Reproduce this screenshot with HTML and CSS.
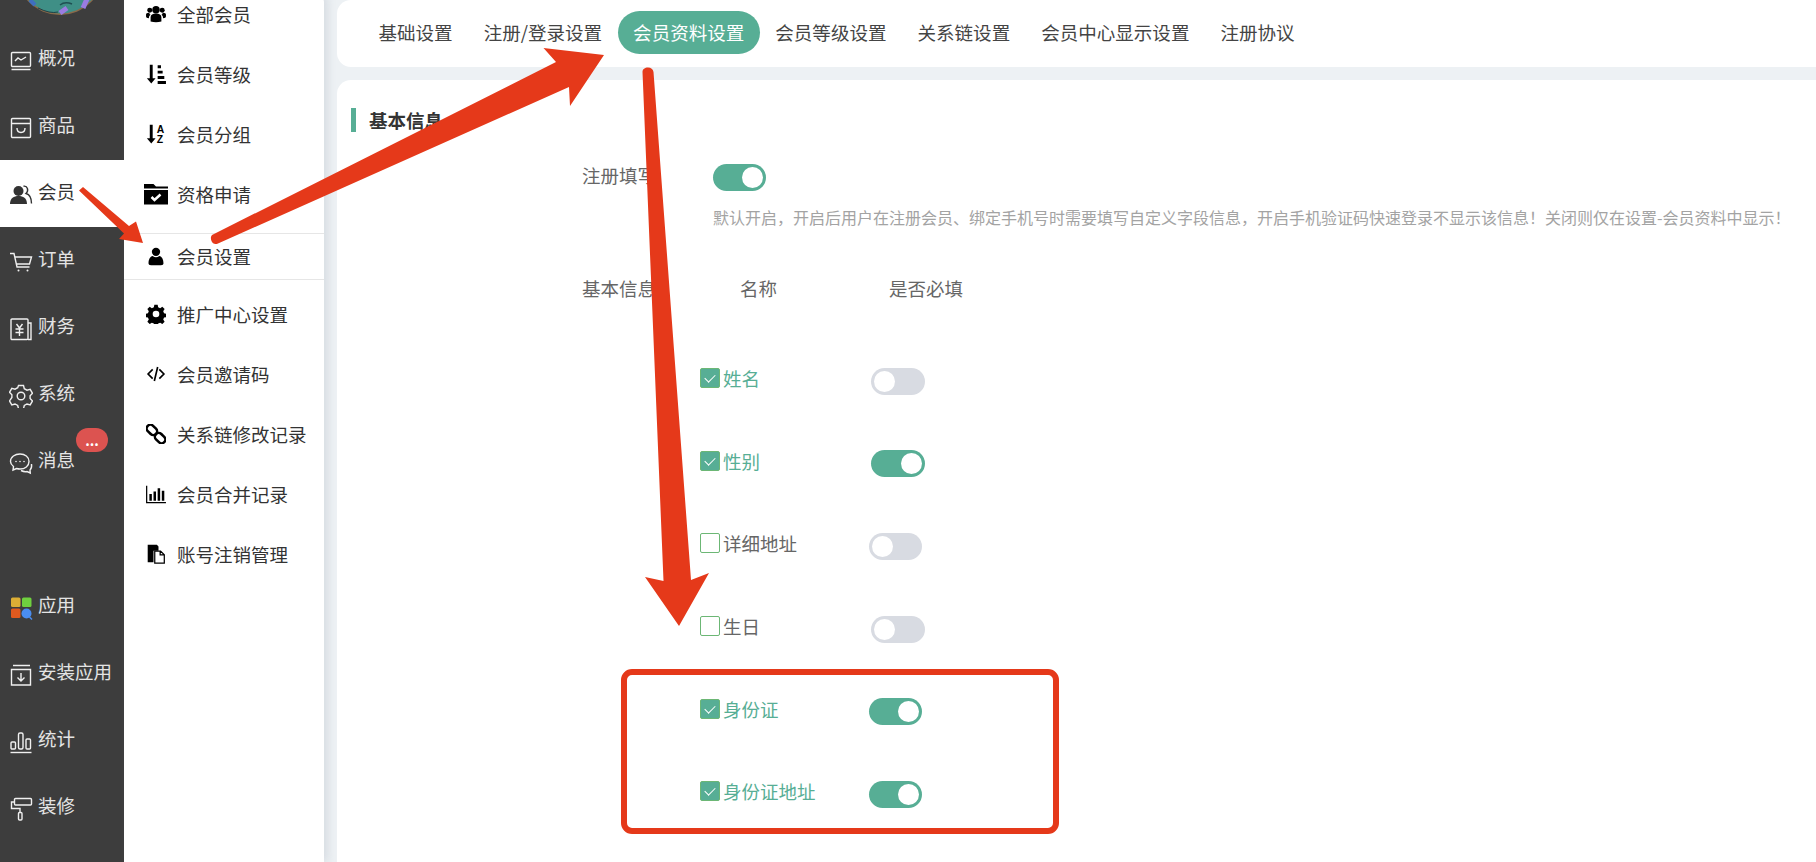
FILE: index.html
```html
<!DOCTYPE html>
<html lang="zh-CN">
<head>
    <meta charset="UTF-8">
    <title>会员资料设置</title>
    <link rel="stylesheet" href="styles.css">
</head>
<body>
    <aside class="sidebar">
        <div class="avatar-wrap">
            <svg class="avatar" viewBox="0 0 124 26">
                <circle cx="60" cy="-29" r="44" fill="#8a6a4a"/>
                <circle cx="60" cy="-30" r="43.500" fill="#3f8f86"/>
                <path d="M38 8q12 6 20 4" stroke="#1f3f44" stroke-width="1" fill="none"/>
                <path d="M60 5q5-4 12-1" stroke="#1f4f52" stroke-width="1.500" fill="none"/>
                <path d="M60 13l7-5M83 8l4-9" stroke="#9a7ce0" stroke-width="5" fill="none"/>
                <path d="M30 0l5 5" stroke="#3f6fc0" stroke-width="4" fill="none"/>
            </svg>
        </div>
        <nav class="side-group">
            <a class="side-item">
                <svg class="side-icon" viewBox="0 0 24 24"><rect x="2.500" y="3.500" width="19" height="14" rx="1"/><path d="M6 12l3-3 3 2 5-3M2.500 20.500h19"/></svg>
                <span>概况</span>
            </a>
            <a class="side-item">
                <svg class="side-icon" viewBox="0 0 24 24"><rect x="2.500" y="2.500" width="19" height="19" rx="1"/><path d="M2.500 7.500h19M8 12c0 6 8 6 8 0"/></svg>
                <span>商品</span>
            </a>
            <a class="side-item active">
                <svg class="side-icon icon-dark" viewBox="0 0 24 24"><circle cx="9.500" cy="8" r="5" class="fill"/><path d="M1 21c0-6 4-8 8.500-8s8.500 2 8.500 8z" class="fill"/><path d="M14.500 3.200c4-.8 5.600 4.500 2.500 7.300 3.500 1 5.500 4.500 5.500 10"/></svg>
                <span>会员</span>
            </a>
            <a class="side-item">
                <svg class="side-icon" viewBox="0 0 24 24"><path d="M1 3.500h4l3 13.500h12.500M6 7h16.500l-2 7H7.500"/><circle cx="9.500" cy="20.500" r="1" class="fill"/><circle cx="18.500" cy="20.500" r="1" class="fill"/></svg>
                <span>订单</span>
            </a>
            <a class="side-item">
                <svg class="side-icon" viewBox="0 0 24 24"><rect x="2" y="2" width="17" height="20.500" rx="1"/><path d="M19 6h3v16.500h-3M7.500 7l3 4 3-4M6.500 12h8M6.500 15.500h8M10.500 11v8"/></svg>
                <span>财务</span>
            </a>
            <a class="side-item">
                <svg class="side-icon" viewBox="0 0 24 24"><path d="M9.500 1.500h5l.8 3.200 2.700 1.500 3.200-.9 2.300 4-2.400 2.400v2.800l2.400 2.400-2.300 4-3.200-.9-2.700 1.500-.8 3.200h-5l-.8-3.200-2.700-1.500-3.200.9-2.300-4L2.900 13.500v-2.800L.5 8.300l2.300-4 3.200.9 2.700-1.500z"/><circle cx="12" cy="12" r="3.800"/></svg>
                <span>系统</span>
            </a>
            <a class="side-item">
                <svg class="side-icon" viewBox="0 0 24 24"><path d="M11 3c5 0 9 3 9 7.500S16 18 11 18c-1.500 0-2.500-.2-3.500-.5L4 19l.5-3.500C2.500 14 1.500 12.500 1.500 10.500 1.500 6 6 3 11 3z"/><path d="M22.500 13c.5 3-.5 5-1.500 6l.3 3-3.300-1.500c-2 .5-4 0-6-1"/><circle cx="7" cy="10.500" r=".8" class="fill"/><circle cx="11" cy="10.500" r=".8" class="fill"/><circle cx="15" cy="10.500" r=".8" class="fill"/></svg>
                <span>消息</span>
                <b class="badge">...</b>
            </a>
        </nav>
        <nav class="side-group side-group-low">
            <a class="side-item">
                <svg class="side-icon icon-color" viewBox="0 0 24 24">
                    <rect x="2" y="1.500" width="9.500" height="9.500" rx="1.500" fill="#dcae35"/>
                    <rect x="13" y="1.500" width="9.500" height="9.500" rx="1.500" fill="#6fd03f"/>
                    <rect x="2" y="12.500" width="9.500" height="9.500" rx="1.500" fill="#e05a1f"/>
                    <circle cx="17.500" cy="17.500" r="5" fill="#4a8df0"/>
                    <path d="M20.500 21l2.500 2.500" stroke="#4a8df0" stroke-width="1.500"/>
                </svg>
                <span>应用</span>
            </a>
            <a class="side-item">
                <svg class="side-icon" viewBox="0 0 24 24"><path d="M4 2.500h17M2.500 6.500h19v15.500h-19zM12 10v7.500M8.500 14.500l3.500 3.500 3.500-3.500"/></svg>
                <span>安装应用</span>
            </a>
            <a class="side-item">
                <svg class="side-icon" viewBox="0 0 24 24"><rect x="2" y="12" width="4.500" height="7" rx="1"/><rect x="9.500" y="3" width="4.500" height="16" rx="1.500"/><rect x="17" y="9" width="4.500" height="10" rx="1"/><path d="M1.500 22.500h21"/></svg>
                <span>统计</span>
            </a>
            <a class="side-item">
                <svg class="side-icon" viewBox="0 0 24 24"><rect x="5.500" y="1.500" width="17" height="6.500" rx="1"/><path d="M5.500 5H2.500v6.500H11v4"/><rect x="9.500" y="15.500" width="3.500" height="7.500" rx="1"/></svg>
                <span>装修</span>
            </a>
        </nav>
    </aside>

    <nav class="submenu">
        <a class="sub-item">
            <svg class="sub-icon" viewBox="0 0 24 24"><circle cx="12" cy="7" r="4.500"/><circle cx="4.500" cy="7.500" r="3"/><circle cx="19.500" cy="7.500" r="3"/><path d="M5.500 21v-5c0-3 2.500-4.500 6.500-4.500s6.500 1.500 6.500 4.500v5q-6.500 2-13 0zM0 12.500c0-1.500 2-2.500 4-2 0 1 .5 2 1.500 2.500-1.500 1-2 2-2 4C1 17 0 16 0 15zM24 12.500c0-1.500-2-2.500-4-2 0 1-.5 2-1.500 2.500 1.500 1 2 2 2 4 2.500 0 3.500-1 3.500-2z"/></svg>
            <span>全部会员</span>
        </a>
        <a class="sub-item">
            <svg class="sub-icon" viewBox="0 0 24 24"><path d="M4.500 1h3.500v16h3.500l-5.200 6.500L1 17h3.500zM14 1.500h4v3.500h-4zM14 8h6v3.500h-6zM14 14.500h8v3.500h-8zM14 20.500h10V24H14z"/></svg>
            <span>会员等级</span>
        </a>
        <a class="sub-item">
            <svg class="sub-icon" viewBox="0 0 24 24"><path d="M4.500 1h3.500v16h3.500l-5.200 6.500L1 17h3.500z"/><text x="13" y="10.500" class="sort-letter">A</text><text x="13" y="23" class="sort-letter">Z</text></svg>
            <span>会员分组</span>
        </a>
        <a class="sub-item">
            <svg class="sub-icon sub-icon-wide" viewBox="0 0 24 24"><path d="M0 2h9.500l2.500 2.500h12v2H0zM0 8h24v14.500H0z"/><path class="sub-check" d="M7.500 15l3 3 6-5.500"/></svg>
            <span>资格申请</span>
        </a>
        <a class="sub-item active">
            <svg class="sub-icon" viewBox="0 0 24 24"><circle cx="12" cy="7" r="5"/><path d="M3 21c0-5 2-8.500 5-9 2.500 2 5.500 2 8 0 3 .5 5 4 5 9 0 1-1 2-3 2H6c-2 0-3-1-3-2z"/></svg>
            <span>会员设置</span>
        </a>
        <a class="sub-item">
            <svg class="sub-icon" viewBox="0 0 24 24"><path fill-rule="evenodd" d="M10 1.500h4l.6 3 2.400 1 2.600-1.700 2.800 2.800-1.700 2.600 1 2.400 3 .6v4l-3 .6-1 2.400 1.700 2.600-2.800 2.800-2.600-1.700-2.400 1-.6 3h-4l-.6-3-2.400-1-2.600 1.700-2.800-2.800 1.700-2.600-1-2.400-3-.6v-4l3-.6 1-2.400L1.600 6.600l2.800-2.800L7 5.500l2.400-1zM12 8.500a4 4 0 1 0 0 8 4 4 0 0 0 0-8z" transform="translate(0 -.5)"/></svg>
            <span>推广中心设置</span>
        </a>
        <a class="sub-item">
            <svg class="sub-icon" viewBox="0 0 24 24"><path class="sub-line" d="M8 6.500L2.500 12 8 17.500M16 6.500l5.500 5.500-5.500 5.500M14 3.500l-4 17"/></svg>
            <span>会员邀请码</span>
        </a>
        <a class="sub-item">
            <svg class="sub-icon" viewBox="0 0 24 24"><g class="sub-chain" transform="rotate(45 12 12)"><rect x="-2" y="7.500" width="14" height="9" rx="4.500"/><rect x="12" y="7.500" width="14" height="9" rx="4.500"/></g></svg>
            <span>关系链修改记录</span>
        </a>
        <a class="sub-item">
            <svg class="sub-icon" viewBox="0 0 24 24"><path d="M0 2h1.500v19.500H24V23H0zM4 12h3v8H4zM9 9h3v11H9zM14 5h3v15h-3zM19 8h3v12h-3z"/></svg>
            <span>会员合并记录</span>
        </a>
        <a class="sub-item">
            <svg class="sub-icon" viewBox="0 0 24 24"><path d="M2 1h11l2 2v5H9v14H2z"/><path class="sub-doc" d="M10.500 8.500h7l4.500 4.500v10H10.500zM17 8.500V13h5"/></svg>
            <span>账号注销管理</span>
        </a>
    </nav>

    <main class="main">
        <div class="tabs-card">
            <a class="tab">基础设置</a>
            <a class="tab">注册/登录设置</a>
            <a class="tab active">会员资料设置</a>
            <a class="tab">会员等级设置</a>
            <a class="tab">关系链设置</a>
            <a class="tab">会员中心显示设置</a>
            <a class="tab">注册协议</a>
        </div>

        <section class="content-card">
            <h3 class="section-title">基本信息</h3>

            <div class="form-row">
                <label class="form-label">注册填写</label>
                <div class="form-body">
                    <span class="switch on"></span>
                    <p class="help">默认开启，开启后用户在注册会员、绑定手机号时需要填写自定义字段信息，开启手机验证码快速登录不显示该信息！关闭则仅在设置-会员资料中显示！</p>
                </div>
            </div>

            <div class="head-row">
                <span class="form-label">基本信息</span>
                <span class="head-name">名称</span>
                <span class="head-required">是否必填</span>
            </div>

            <div class="fields">
                <div class="field">
                    <span class="check on">姓名</span>
                    <span class="switch"></span>
                </div>
                <div class="field">
                    <span class="check on">性别</span>
                    <span class="switch on"></span>
                </div>
                <div class="field">
                    <span class="check">详细地址</span>
                    <span class="switch left"></span>
                </div>
                <div class="field">
                    <span class="check">生日</span>
                    <span class="switch"></span>
                </div>
                <div class="field">
                    <span class="check on">身份证</span>
                    <span class="switch on left"></span>
                </div>
                <div class="field">
                    <span class="check on">身份证地址</span>
                    <span class="switch on left"></span>
                </div>
            </div>
        </section>
    </main>

    <!-- 标注：红色箭头和方框 -->
    <svg class="marks" viewBox="0 0 1816 862">
        <path d="M79 190.500L83 187l46 39 7-4.500 7 21.500-24-4 5-5.500z"/>
        <path d="M213 234.500L556 62l-12.500-14 60.500 7-34 51-1-19L218 243.500c-3 1.500-5.500 0-6.500-2.500s-1-5.500 1.500-6.500z"/>
        <path d="M642.500 72c0-3 2.500-4.500 5.500-4.500s5 1.500 5.500 4.500l37.500 508 18-7-30 53-34-49 18.500 4z"/>
        <rect class="mark-box" x="624" y="672" width="432" height="159" rx="8"/>
    </svg>
</body>
</html>
```

FILE: styles.css
```css
* {
    box-sizing: border-box;
}

html, body {
    height: 100%;
}

body {
    margin: 0;
    display: flex;
    overflow: hidden;
    position: relative;
    background-color: #edf1f4;
    font-family: "Noto Sans CJK SC", "Noto Sans", sans-serif;
    font-size: 18.5px;
    color: #333;
}

/* 左侧深色菜单 */
.sidebar {
    width: 124px;
    flex-shrink: 0;
    background-color: #3d3d3d;
}

.avatar-wrap {
    height: 26px;
    overflow: hidden;
}

.avatar {
    display: block;
    width: 124px;
    height: 26px;
}

.side-group-low {
    margin-top: 78px;
}

.side-item {
    position: relative;
    height: 67px;
    display: flex;
    align-items: center;
    padding-left: 9px;
    gap: 5px;
    color: #e4e4e4;
    white-space: nowrap;
}

.side-item.active {
    background-color: #fff;
    color: #333;
}

.side-icon {
    width: 24px;
    height: 24px;
    margin-top: 3px;
    fill: none;
    stroke: #f0f0f0;
    stroke-width: 1.4;
}

.side-icon .fill {
    fill: #f0f0f0;
    stroke: none;
}

.icon-dark {
    stroke: #333;
}

.icon-dark .fill {
    fill: #333;
}

.icon-color {
    stroke: none;
}

.side-item span {
    margin-top: -6px;
}

.badge {
    position: absolute;
    top: 0;
    left: 76px;
    width: 32px;
    height: 24px;
    border-radius: 12px;
    background-color: #dc5350;
    color: #fff;
    font-size: 14px;
    font-weight: 700;
    line-height: 24px;
    text-align: center;
}

/* 二级菜单 */
.submenu {
    width: 200px;
    flex-shrink: 0;
    margin-top: -9px;
    display: flex;
    flex-direction: column;
    gap: 14px;
    background-color: #fff;
    border-top-right-radius: 12px;
    box-shadow: 4px 0 8px rgba(120, 135, 150, 0.18);
    color: #333;
}

.sub-item {
    height: 46px;
    flex-shrink: 0;
    display: flex;
    align-items: center;
    padding-left: 20px;
    gap: 9px;
    white-space: nowrap;
}

.sub-item.active {
    height: 47px;
    margin: 2px 0 -3px;
    padding-bottom: 2px;
    border-top: 1px solid #e6e6e6;
    border-bottom: 1px solid #e6e6e6;
}

.sub-icon {
    width: 24px;
    height: 24px;
    flex-shrink: 0;
    transform: scale(0.83);
    fill: #000;
}

.sub-icon-wide {
    transform: none;
}

.sort-letter {
    font-family: "Liberation Sans", sans-serif;
    font-size: 12.5px;
    font-weight: 700;
}

.sub-check {
    fill: none;
    stroke: #fff;
    stroke-width: 2.500;
}

.sub-line {
    fill: none;
    stroke: #000;
    stroke-width: 2;
}

.sub-chain {
    fill: none;
    stroke: #000;
    stroke-width: 3;
}

.sub-doc {
    fill: #fff;
    stroke: #000;
    stroke-width: 1.500;
}

/* 右侧内容 */
.main {
    flex: 1;
    min-width: 0;
    padding-left: 13px;
    display: flex;
    flex-direction: column;
    gap: 13px;
}

.tabs-card {
    height: 67px;
    flex-shrink: 0;
    display: flex;
    align-items: center;
    padding: 0 0 2px 26px;
    background-color: #fff;
    border-radius: 14px 0 0 14px;
}

.tab {
    height: 43px;
    padding: 0 15.5px;
    line-height: 41px;
    font-size: 18.55px;
    border-radius: 22px;
    color: #444;
    white-space: nowrap;
}

.tab.active {
    background-color: #57ae95;
    color: #fff;
}

.content-card {
    flex: 1;
    padding-top: 28px;
    background-color: #fff;
    border-radius: 14px 0 0 0;
}

.section-title {
    height: 24px;
    margin: 0 0 0 14px;
    padding-left: 13px;
    border-left: 5px solid #57ae95;
    font-size: 18.5px;
    line-height: 24px;
    font-weight: 700;
    color: #333;
}

.form-row {
    display: flex;
    margin-top: 32px;
    padding-left: 245px;
}

.form-label {
    width: 131px;
    flex-shrink: 0;
    color: #666;
    white-space: nowrap;
}

.form-row .form-label {
    line-height: 22px;
}

.help {
    margin: 15px 0 0;
    font-size: 16px;
    line-height: 22px;
    color: #a3a3a3;
    white-space: nowrap;
}

.switch {
    position: relative;
    display: block;
    width: 54px;
    height: 27px;
    flex-shrink: 0;
    border-radius: 14px;
    background-color: #d8dbe2;
}

.switch::after {
    content: "";
    position: absolute;
    top: 3px;
    left: 3px;
    width: 21px;
    height: 21px;
    border-radius: 50%;
    background-color: #fff;
}

.switch.on {
    background-color: #57ae95;
}

.switch.on::after {
    left: auto;
    right: 3px;
}

.switch.left {
    width: 53px;
    margin-left: -2px;
}

.form-body .switch {
    width: 53px;
}

.head-row {
    display: flex;
    align-items: center;
    height: 24px;
    margin-top: 48px;
    padding-left: 245px;
    color: #666;
}

.head-name {
    width: 149px;
    margin-left: 27px;
}

.fields {
    margin-top: 40px;
    padding-left: 363px;
}

.field {
    height: 82.6px;
    display: flex;
    align-items: center;
}

.check {
    width: 171px;
    flex-shrink: 0;
    display: flex;
    align-items: center;
    gap: 3px;
    margin-bottom: 6px;
    color: #666;
    white-space: nowrap;
}

.check::before {
    content: "";
    width: 18px;
    height: 18px;
    flex-shrink: 0;
    border: 1px solid #6cb775;
    border-radius: 2px;
    background-color: #fff;
}

.check.on {
    color: #57ae95;
}

.check.on::before {
    background-color: #57ae95;
}

.check.on::after {
    content: "";
    position: absolute;
    width: 9px;
    height: 5px;
    margin-left: 5px;
    margin-top: -2px;
    border-left: 1.5px solid #fff;
    border-bottom: 1.5px solid #fff;
    transform: rotate(-45deg);
}

/* 标注层盖在页面上 */
.marks {
    position: absolute;
    top: 0;
    left: 0;
    width: 1816px;
    height: 862px;
    fill: #e5391a;
    pointer-events: none;
}

.mark-box {
    fill: none;
    stroke: #e5391a;
    stroke-width: 6;
}
```
